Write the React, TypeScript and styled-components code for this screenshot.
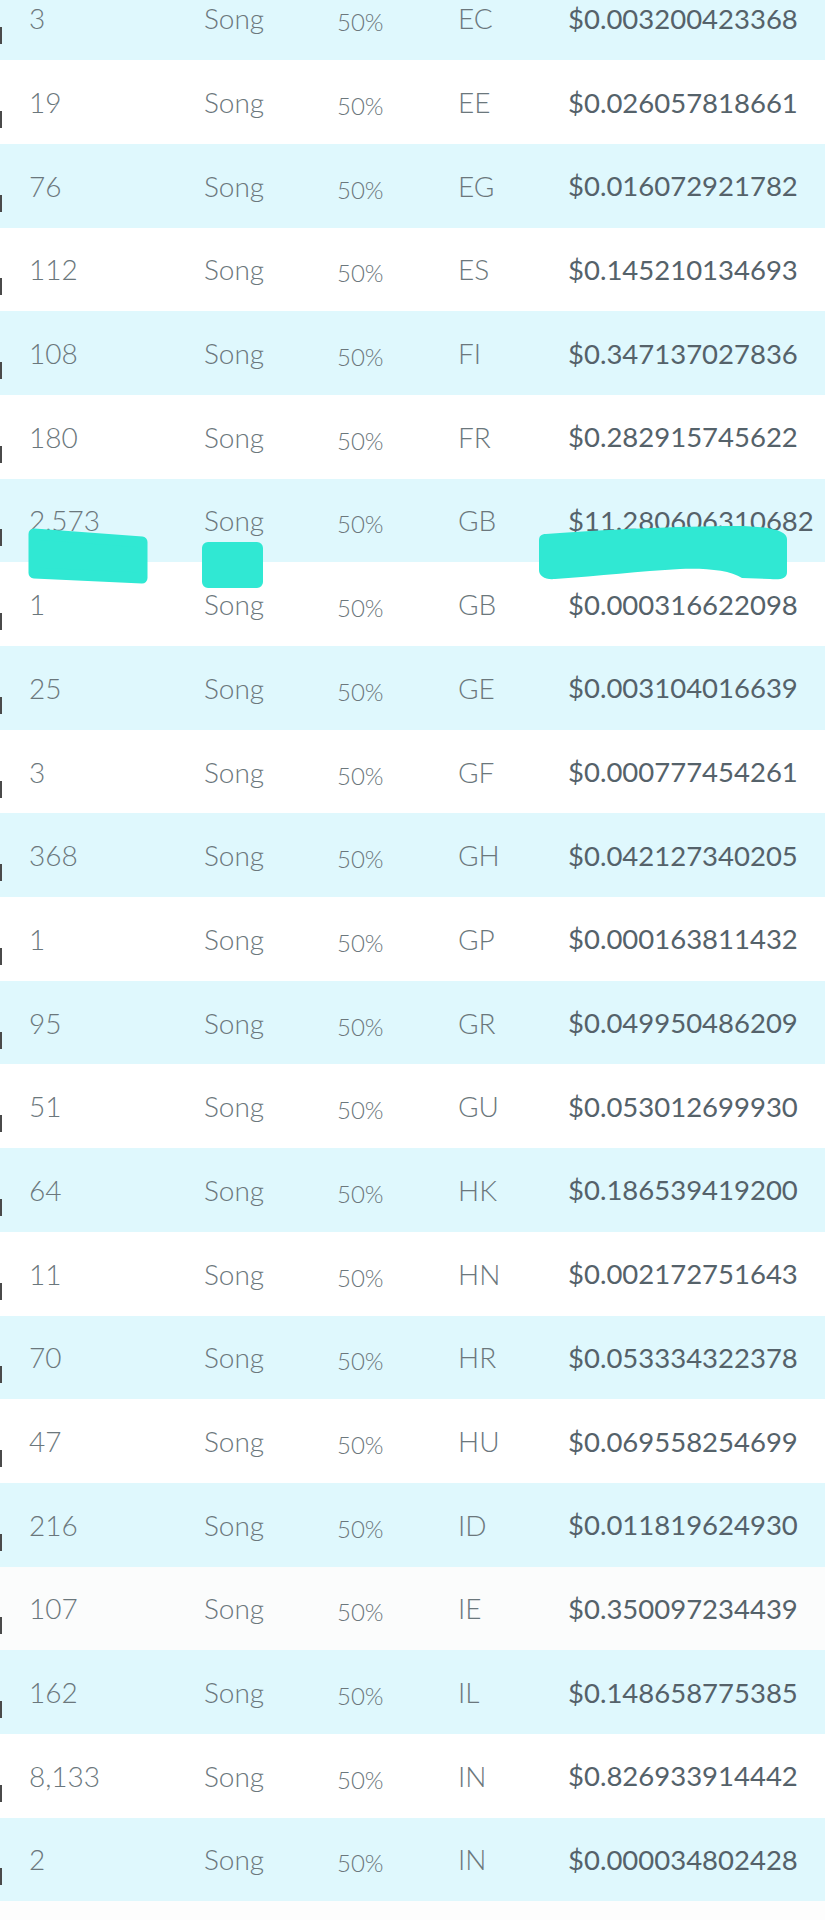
import styled, { createGlobalStyle } from "styled-components";

const GlobalStyle = createGlobalStyle`
  body {
    margin: 0;
    background: #fdfdfd;
    font-family: Lato, "Open Sans", sans-serif;
    overflow: hidden;
  }
`;

type Tone = "cyan" | "white" | "mist";

type Royalty = {
  plays: string;
  country: string;
  amount: string;
  tone: Tone;
  redacted?: boolean;
};

const rows: Royalty[] = [
  { plays: "3", country: "EC", amount: "$0.003200423368", tone: "cyan" },
  { plays: "19", country: "EE", amount: "$0.026057818661", tone: "white" },
  { plays: "76", country: "EG", amount: "$0.016072921782", tone: "cyan" },
  { plays: "112", country: "ES", amount: "$0.145210134693", tone: "white" },
  { plays: "108", country: "FI", amount: "$0.347137027836", tone: "cyan" },
  { plays: "180", country: "FR", amount: "$0.282915745622", tone: "white" },
  { plays: "2,573", country: "GB", amount: "$11.280606310682", tone: "cyan", redacted: true },
  { plays: "1", country: "GB", amount: "$0.000316622098", tone: "white" },
  { plays: "25", country: "GE", amount: "$0.003104016639", tone: "cyan" },
  { plays: "3", country: "GF", amount: "$0.000777454261", tone: "white" },
  { plays: "368", country: "GH", amount: "$0.042127340205", tone: "cyan" },
  { plays: "1", country: "GP", amount: "$0.000163811432", tone: "white" },
  { plays: "95", country: "GR", amount: "$0.049950486209", tone: "cyan" },
  { plays: "51", country: "GU", amount: "$0.053012699930", tone: "white" },
  { plays: "64", country: "HK", amount: "$0.186539419200", tone: "cyan" },
  { plays: "11", country: "HN", amount: "$0.002172751643", tone: "white" },
  { plays: "70", country: "HR", amount: "$0.053334322378", tone: "cyan" },
  { plays: "47", country: "HU", amount: "$0.069558254699", tone: "white" },
  { plays: "216", country: "ID", amount: "$0.011819624930", tone: "cyan" },
  { plays: "107", country: "IE", amount: "$0.350097234439", tone: "mist" },
  { plays: "162", country: "IL", amount: "$0.148658775385", tone: "cyan" },
  { plays: "8,133", country: "IN", amount: "$0.826933914442", tone: "white" },
  { plays: "2", country: "IN", amount: "$0.000034802428", tone: "cyan" },
];

const toneColors: Record<Tone, string> = {
  cyan: "#dff8fd",
  white: "#ffffff",
  mist: "#fbfcfc",
};

const Table = styled.div`
  display: flex;
  flex-direction: column;
  margin-top: -23.5px;
`;

const Row = styled.div<{ $tone: Tone }>`
  position: relative;
  display: grid;
  grid-template-columns: 175px 133px 121px 110px 1fr;
  align-items: center;
  height: 83.7px;
  padding-left: 29px;
  background: ${(p) => toneColors[p.$tone]};
  white-space: nowrap;

  &::before {
    content: "";
    position: absolute;
    left: 0;
    top: calc(50% + 9px);
    width: 2px;
    height: 17px;
    background: #4a4a4a;
  }
`;

const Cell = styled.span`
  font-size: 28px;
  font-weight: 300;
  color: #6b777c;
`;

const Percent = styled.span`
  font-size: 24px;
  font-weight: 300;
  color: #6b777c;
  padding-top: 7px;
`;

const Amount = styled.span`
  font-size: 27.5px;
  font-weight: 400;
  color: #55626a;
`;

const Marker = styled.svg`
  position: absolute;
  left: 0;
  top: 41.3px;
  width: 825px;
  height: 80px;
  overflow: visible;
  z-index: 1;
  pointer-events: none;
`;

const ink = "#30e8d3";

const Redaction = () => (
  <Marker viewBox="0 0 825 80">
    <polygon
      points="34,14 142,22 142,58 34,53"
      fill={ink}
      stroke={ink}
      strokeWidth={11}
      strokeLinejoin="round"
    />
    <polygon
      points="208,28 257,28 257,62 208,62"
      fill={ink}
      stroke={ink}
      strokeWidth={12}
      strokeLinejoin="round"
    />
    <path
      d="M546 14 C600 10 680 6 735 6 C770 6 787 11 787 19 L787 52 C787 59 780 60 770 59 L742 58 C730 50 705 48 680 49 C640 51 600 56 555 59 C545 60 539 56 539 50 L539 21 C539 16 541 14 546 14 Z"
      fill={ink}
    />
  </Marker>
);

const App = () => {
  return (
    <>
      <GlobalStyle />
      <Table>
        {rows.map((r, i) => (
          <Row key={i} $tone={r.tone}>
            <Cell>{r.plays}</Cell>
            <Cell>Song</Cell>
            <Percent>50%</Percent>
            <Cell>{r.country}</Cell>
            <Amount>{r.amount}</Amount>
            {r.redacted && <Redaction />}
          </Row>
        ))}
      </Table>
    </>
  );
};

export default App;
